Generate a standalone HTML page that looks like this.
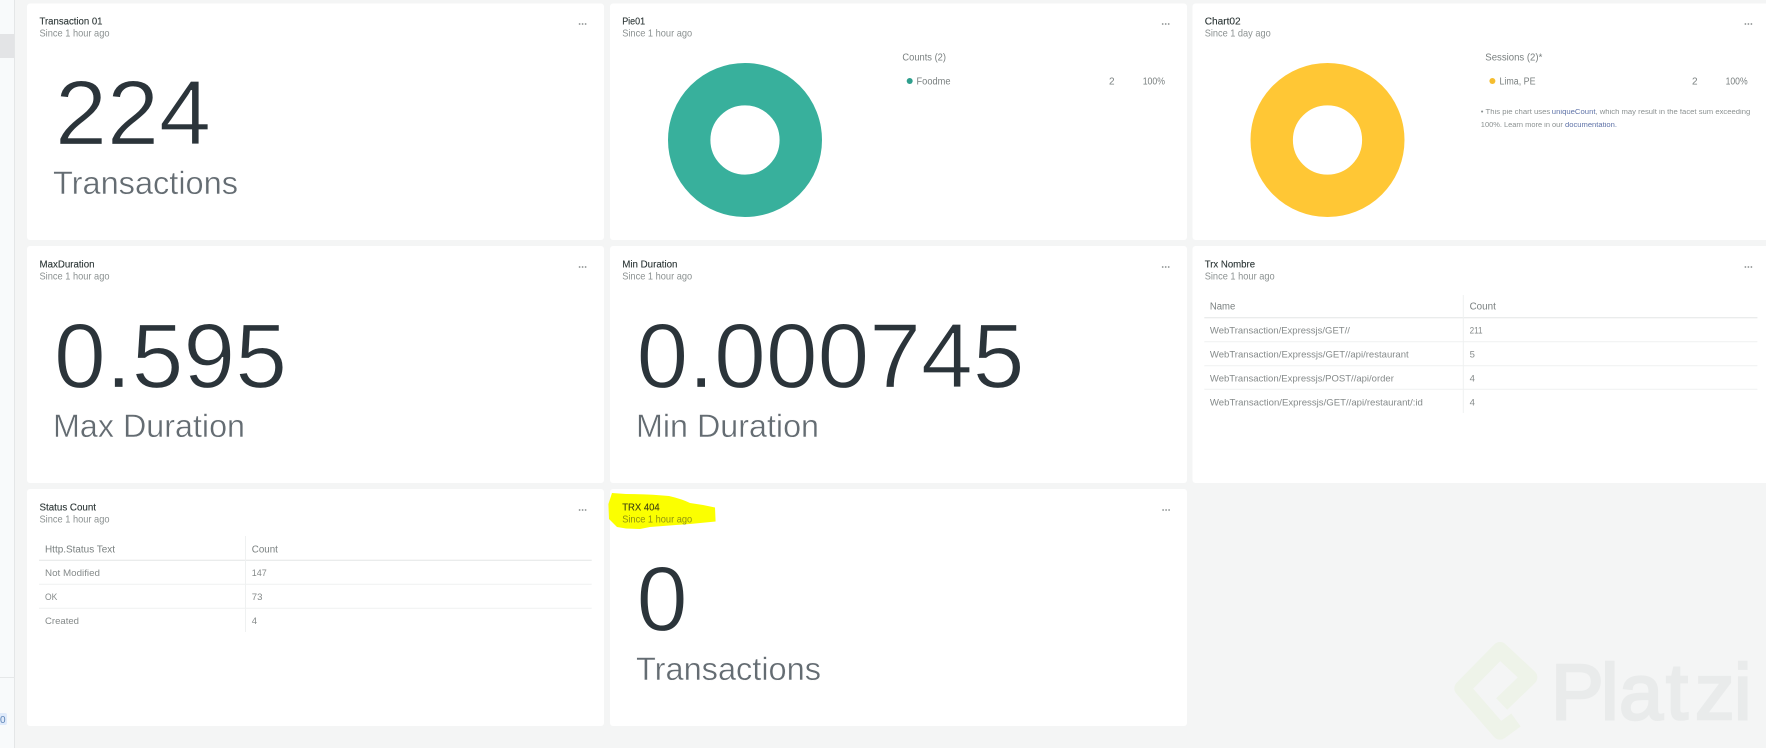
<!DOCTYPE html>
<html><head><meta charset="utf-8"><style>
html,body{margin:0;padding:0;width:1766px;height:748px;overflow:hidden;background:#f4f5f5}
svg{display:block;position:absolute;left:0;top:0}
text{font-family:"Liberation Sans",sans-serif}
.t{font-size:10.5px;fill:#2b3535;stroke:#2b3535;stroke-width:.12;filter:blur(.3px)}
.s{font-size:10.5px;fill:#8b9191;filter:blur(.3px)}
.b{font-size:92px;fill:#2b343a;stroke:#fff;stroke-width:1.2}
.l{font-size:32px;fill:#646c72;stroke:#fff;stroke-width:.4}
.c{font-size:9.5px;fill:#858a8a;filter:blur(.3px)}
.h{font-size:10px;fill:#7a8080;filter:blur(.3px)}
.n{font-size:7px;fill:#8b9191;filter:blur(.3px)}
.m{fill:#8a8f8f}
.ln{stroke:#eff1f1;stroke-width:1}
.hl{stroke:#e3e5e5;stroke-width:1}
</style></head><body>
<svg width="1766" height="748" viewBox="0 0 1766 748" xmlns="http://www.w3.org/2000/svg">
<rect width="1766" height="748" fill="#f4f5f5"/>
<!-- sidebar -->
<rect x="0" y="0" width="14" height="748" fill="#f8fafb"/>
<rect x="14" y="0" width="1" height="748" fill="#e4e6e7"/>
<rect x="0" y="34" width="14" height="24" fill="#e3e4e6"/>
<rect x="0" y="677" width="15" height="1" fill="#e6e8e9"/>
<rect x="-3" y="713" width="10" height="12" rx="2" fill="#dfeafa"/>
<text x="0" y="723" font-size="10" fill="#5f86b8">0</text>
<!-- watermark -->
<g transform="translate(1400,600) scale(.3333)" fill="none" stroke="#eef3e9" stroke-width="48" stroke-linejoin="round" stroke-linecap="butt">
<path d="M305 312 L388 232 L300 150 L187 265 L300 395 L348 360"/>
</g>
<text x="1551 1601 1619 1666 1695 1734" y="719" font-size="79" fill="#e9ebeb" stroke="#e9ebeb" stroke-width="2.6">Platzi</text>
<!-- cards -->
<g fill="#fff">
<rect x="27" y="3.5" width="577" height="236.5" rx="3"/>
<rect x="610" y="3.5" width="577" height="236.5" rx="3"/>
<rect x="1192.5" y="3.5" width="578" height="236.5" rx="3"/>
<rect x="27" y="246" width="577" height="237" rx="3"/>
<rect x="610" y="246" width="577" height="237" rx="3"/>
<rect x="1192.5" y="246" width="578" height="237" rx="3"/>
<rect x="27" y="489" width="577" height="237" rx="3"/>
<rect x="610" y="489" width="577" height="237" rx="3"/>
</g>
<!-- highlight -->
<path d="M612 493 L626 494 Q650 494 669 496 Q682 499 690 503 L703 505 L715 507.5 L715.6 521.5 L690 524 L676 525 L650 527 L640 529 L626 528.5 L617 527 L609 519 L608.4 504 Z" fill="#fbff00"/>
<!-- headers -->
<text class="t" x="39.5" y="24.5" textLength="63" lengthAdjust="spacingAndGlyphs">Transaction 01</text>
<text class="s" x="39.5" y="36.5" textLength="70" lengthAdjust="spacingAndGlyphs">Since 1 hour ago</text>
<text class="t" x="622.2" y="24.5" textLength="23" lengthAdjust="spacingAndGlyphs">Pie01</text>
<text class="s" x="622.2" y="36.5" textLength="70" lengthAdjust="spacingAndGlyphs">Since 1 hour ago</text>
<text class="t" x="1204.7" y="24.5" textLength="36" lengthAdjust="spacingAndGlyphs">Chart02</text>
<text class="s" x="1204.7" y="36.5" textLength="66" lengthAdjust="spacingAndGlyphs">Since 1 day ago</text>
<text class="t" x="39.5" y="267.7" textLength="55" lengthAdjust="spacingAndGlyphs">MaxDuration</text>
<text class="s" x="39.5" y="279.7" textLength="70" lengthAdjust="spacingAndGlyphs">Since 1 hour ago</text>
<text class="t" x="622.2" y="267.7" textLength="55.3" lengthAdjust="spacingAndGlyphs">Min Duration</text>
<text class="s" x="622.2" y="279.7" textLength="70" lengthAdjust="spacingAndGlyphs">Since 1 hour ago</text>
<text class="t" x="1204.7" y="267.7" textLength="50.4" lengthAdjust="spacingAndGlyphs">Trx Nombre</text>
<text class="s" x="1204.7" y="279.7" textLength="70" lengthAdjust="spacingAndGlyphs">Since 1 hour ago</text>
<text class="t" x="39.5" y="510.5" textLength="56.5" lengthAdjust="spacingAndGlyphs">Status Count</text>
<text class="s" x="39.5" y="522.5" textLength="70" lengthAdjust="spacingAndGlyphs">Since 1 hour ago</text>
<text class="t" x="622.2" y="510.5" textLength="37.5" lengthAdjust="spacingAndGlyphs" style="fill:#3d4010;stroke:#3d4010">TRX 404</text>
<text class="s" x="622.2" y="522.5" textLength="70" lengthAdjust="spacingAndGlyphs" style="fill:#8f9210">Since 1 hour ago</text>
<!-- menu dots -->
<g class="m">
<circle cx="579.6" cy="24" r=".9"/><circle cx="582.6" cy="24" r=".9"/><circle cx="585.6" cy="24" r=".9"/>
<circle cx="1162.7" cy="24" r=".9"/><circle cx="1165.7" cy="24" r=".9"/><circle cx="1168.7" cy="24" r=".9"/>
<circle cx="1745.4" cy="24" r=".9"/><circle cx="1748.4" cy="24" r=".9"/><circle cx="1751.4" cy="24" r=".9"/>
<circle cx="579.6" cy="267" r=".9"/><circle cx="582.6" cy="267" r=".9"/><circle cx="585.6" cy="267" r=".9"/>
<circle cx="1162.7" cy="267" r=".9"/><circle cx="1165.7" cy="267" r=".9"/><circle cx="1168.7" cy="267" r=".9"/>
<circle cx="1745.4" cy="267" r=".9"/><circle cx="1748.4" cy="267" r=".9"/><circle cx="1751.4" cy="267" r=".9"/>
<circle cx="579.6" cy="510" r=".9"/><circle cx="582.6" cy="510" r=".9"/><circle cx="585.6" cy="510" r=".9"/>
<circle cx="1163.1" cy="510" r=".9"/><circle cx="1166.1" cy="510" r=".9"/><circle cx="1169.1" cy="510" r=".9"/>
</g>
<!-- billboard numbers -->
<text class="b" x="55" y="144.3" textLength="156" lengthAdjust="spacingAndGlyphs">224</text>
<text class="l" x="53" y="194" textLength="185" lengthAdjust="spacingAndGlyphs">Transactions</text>
<text class="b" x="54" y="387.6" textLength="233" lengthAdjust="spacingAndGlyphs">0.595</text>
<text class="l" x="53" y="437" textLength="192" lengthAdjust="spacingAndGlyphs">Max Duration</text>
<text class="b" x="636.5" y="387.6" textLength="388" lengthAdjust="spacingAndGlyphs">0.000745</text>
<text class="l" x="636" y="437" textLength="183" lengthAdjust="spacingAndGlyphs">Min Duration</text>
<text class="b" x="636.5" y="630.3">0</text>
<text class="l" x="636" y="680" textLength="185" lengthAdjust="spacingAndGlyphs">Transactions</text>
<!-- donuts -->
<circle cx="745" cy="140" r="55.8" fill="none" stroke="#38b09c" stroke-width="42.4"/>
<circle cx="1327.5" cy="140" r="55.8" fill="none" stroke="#ffc735" stroke-width="42.4"/>
<!-- legend pie -->
<text class="h" x="902.4" y="60.5" textLength="43.6" lengthAdjust="spacingAndGlyphs">Counts (2)</text>
<circle cx="909.7" cy="81" r="3" fill="#2f9f8d"/>
<text class="h" x="916.5" y="84.7" textLength="34" lengthAdjust="spacingAndGlyphs">Foodme</text>
<text class="h" x="1109" y="84.7">2</text>
<text class="h" x="1142.7" y="84.7" textLength="22.3" lengthAdjust="spacingAndGlyphs">100%</text>
<!-- legend chart -->
<text class="h" x="1485.3" y="60.5" textLength="57" lengthAdjust="spacingAndGlyphs">Sessions (2)*</text>
<circle cx="1492.4" cy="81" r="3" fill="#f5bd2f"/>
<text class="h" x="1499.5" y="84.7" textLength="36" lengthAdjust="spacingAndGlyphs">Lima, PE</text>
<text class="h" x="1692" y="84.7">2</text>
<text class="h" x="1725.6" y="84.7" textLength="22" lengthAdjust="spacingAndGlyphs">100%</text>
<text class="n" x="1480.8" y="114.2" textLength="69.5" lengthAdjust="spacingAndGlyphs">• This pie chart uses</text>
<text class="n" x="1551.8" y="114.2" textLength="43.7" lengthAdjust="spacingAndGlyphs" style="fill:#5f73a8">uniqueCount</text>
<text class="n" x="1595.5" y="114.2" textLength="154.8" lengthAdjust="spacingAndGlyphs">, which may result in the facet sum exceeding</text>
<text class="n" x="1480.8" y="127.2" textLength="82" lengthAdjust="spacingAndGlyphs">100%. Learn more in our</text>
<text class="n" x="1565" y="127.2" textLength="52" lengthAdjust="spacingAndGlyphs" style="fill:#5f73a8">documentation.</text>
<!-- table Trx -->
<line class="hl" x1="1204.3" x2="1757.4" y1="317.7" y2="317.7"/>
<line class="ln" x1="1204.3" x2="1757.4" y1="341.7" y2="341.7"/>
<line class="ln" x1="1204.3" x2="1757.4" y1="365.7" y2="365.7"/>
<line class="ln" x1="1204.3" x2="1757.4" y1="389.3" y2="389.3"/>
<line class="ln" x1="1463.3" x2="1463.3" y1="295" y2="413"/>
<text class="h" x="1209.9" y="309.5" textLength="25.4" lengthAdjust="spacingAndGlyphs">Name</text>
<text class="h" x="1469.6" y="309.5" textLength="26.2" lengthAdjust="spacingAndGlyphs">Count</text>
<text class="c" x="1209.9" y="333.5" textLength="140" lengthAdjust="spacingAndGlyphs">WebTransaction/Expressjs/GET//</text>
<text class="c" x="1469.6" y="333.5" textLength="13" lengthAdjust="spacingAndGlyphs">211</text>
<text class="c" x="1209.9" y="357.5" textLength="198.8" lengthAdjust="spacingAndGlyphs">WebTransaction/Expressjs/GET//api/restaurant</text>
<text class="c" x="1469.6" y="357.5">5</text>
<text class="c" x="1209.9" y="381.5" textLength="184" lengthAdjust="spacingAndGlyphs">WebTransaction/Expressjs/POST//api/order</text>
<text class="c" x="1469.6" y="381.5">4</text>
<text class="c" x="1209.9" y="405.5" textLength="213" lengthAdjust="spacingAndGlyphs">WebTransaction/Expressjs/GET//api/restaurant/:id</text>
<text class="c" x="1469.6" y="405.5">4</text>
<!-- table Status -->
<line class="hl" x1="39" x2="591.7" y1="560.3" y2="560.3"/>
<line class="ln" x1="39" x2="591.7" y1="584.3" y2="584.3"/>
<line class="ln" x1="39" x2="591.7" y1="608.3" y2="608.3"/>
<line class="ln" x1="245.5" x2="245.5" y1="536" y2="632"/>
<text class="h" x="45" y="552.5" textLength="70" lengthAdjust="spacingAndGlyphs">Http.Status Text</text>
<text class="h" x="251.8" y="552.5" textLength="26.1" lengthAdjust="spacingAndGlyphs">Count</text>
<text class="c" x="45" y="576.2" textLength="55" lengthAdjust="spacingAndGlyphs">Not Modified</text>
<text class="c" x="251.8" y="576.2" textLength="15" lengthAdjust="spacingAndGlyphs">147</text>
<text class="c" x="45" y="600.2" textLength="12.3" lengthAdjust="spacingAndGlyphs">OK</text>
<text class="c" x="251.8" y="600.2" textLength="10.7" lengthAdjust="spacingAndGlyphs">73</text>
<text class="c" x="45" y="624.2" textLength="34" lengthAdjust="spacingAndGlyphs">Created</text>
<text class="c" x="251.8" y="624.2">4</text>
</svg>
</body></html>
